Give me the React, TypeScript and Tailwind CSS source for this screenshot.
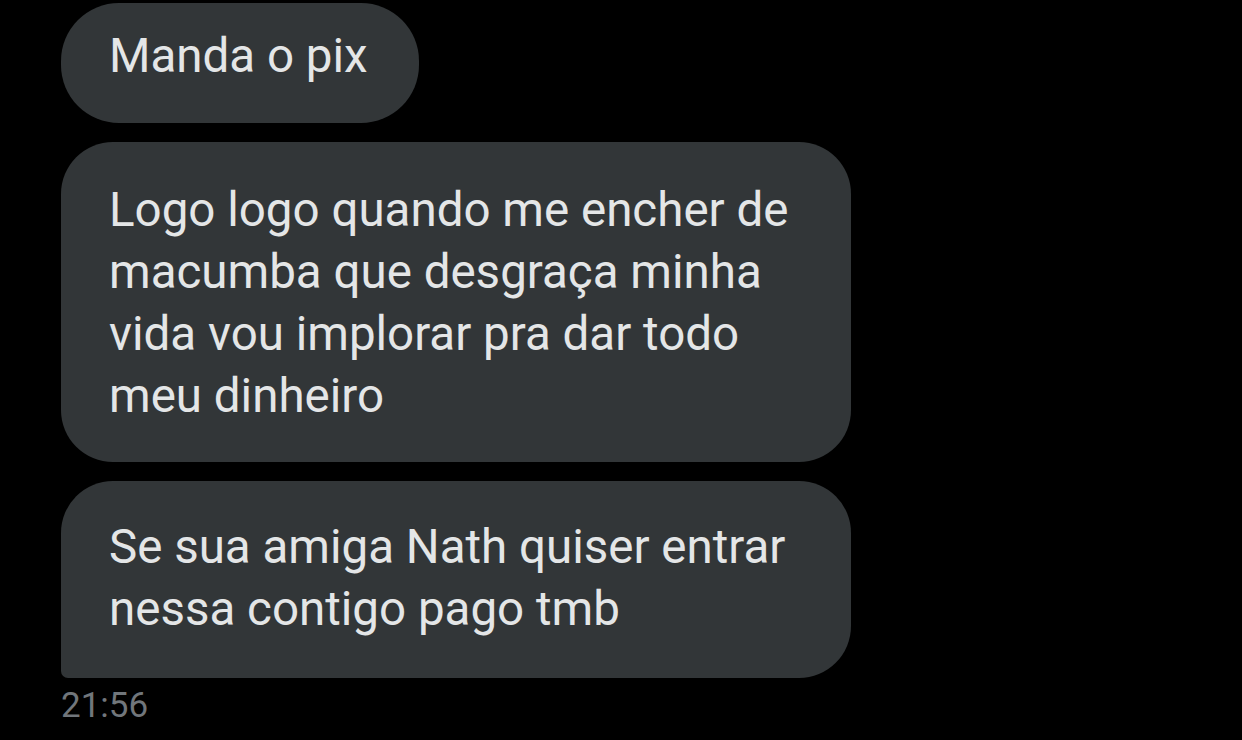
import React from "react";

const lines2 = [
  "Logo logo quando me encher de",
  "macumba que desgraça minha",
  "vida vou implorar pra dar todo",
  "meu dinheiro",
];
const lines3 = ["Se sua amiga Nath quiser entrar", "nessa contigo pago tmb"];

export default function App() {
  return (
    <div
      className="w-[1242px] h-[740px] overflow-hidden bg-black text-[#e4e6e7]"
      style={{ fontFamily: "Roboto, 'Noto Sans', sans-serif" }}
    >
      <div className="flex flex-col items-start gap-[19px] pl-[61px] pt-[3px] text-[47.5px] leading-[62px] whitespace-nowrap">
        <div className="w-[358px] rounded-[58px] bg-[#323638] pl-12 pt-[22px] pb-[36px]">
          Manda o pix
        </div>
        <div className="w-[790px] rounded-[52px] bg-[#323638] pl-12 pt-[37px] pb-[35px]">
          {lines2.map((l) => (
            <div key={l}>{l}</div>
          ))}
        </div>
        <div className="w-[790px] rounded-[52px] rounded-bl-[7px] bg-[#323638] pl-12 pt-[35px] pb-[38px]">
          {lines3.map((l) => (
            <div key={l}>{l}</div>
          ))}
        </div>
      </div>
      <div className="pl-[61px] mt-[6px] text-[35px] leading-[44px] text-[#71767b]">21:56</div>
    </div>
  );
}
